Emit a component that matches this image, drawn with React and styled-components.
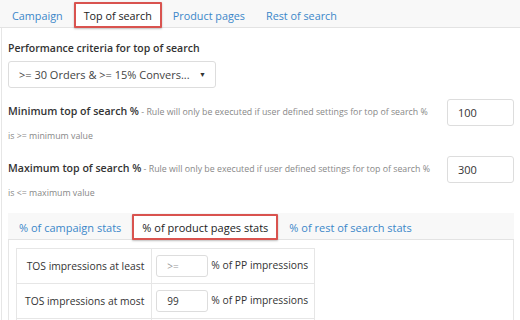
import React, { useState } from 'react';
import styled, { createGlobalStyle } from 'styled-components';

const GlobalStyle = createGlobalStyle`
  body {
    margin: 0;
    background: #fff;
    font-family: "Open Sans", "Noto Sans", sans-serif;
    color: #333;
  }
`;

const App = () => {
  const [tab, setTab] = useState('Top of search');
  const [subTab, setSubTab] = useState('% of product pages stats');
  const tabs = ['Campaign', 'Top of search', 'Product pages', 'Rest of search'];
  const subTabs = ['% of campaign stats', '% of product pages stats', '% of rest of search stats'];

  return (
    <Page>
      <GlobalStyle />
      <TabBar>
        {tabs.map((t) => (
          <Tab key={t} $active={t === tab} onClick={() => setTab(t)}>{t}</Tab>
        ))}
      </TabBar>
      <Body>
        <Label>Performance criteria for top of search</Label>
        <Select>
          <span>&gt;= 30 Orders &amp; &gt;= 15% Convers...</span>
          <Caret>▼</Caret>
        </Select>

        <Settings>
          <Setting>
            <SettingText>
              <strong>Minimum top of search %</strong>
              <Hint> - Rule will only be executed if user defined settings for top of search % is &gt;= minimum value</Hint>
            </SettingText>
            <NumInput defaultValue="100" />
          </Setting>

          <Setting>
            <SettingText>
              <strong>Maximum top of search %</strong>
              <Hint> - Rule will only be executed if user defined settings for top of search % is &lt;= maximum value</Hint>
            </SettingText>
            <NumInput defaultValue="300" />
          </Setting>
        </Settings>

        <SubPanel>
          <SubTabBar>
            {subTabs.map((t) => (
              <SubTab key={t} $active={t === subTab} onClick={() => setSubTab(t)}>{t}</SubTab>
            ))}
          </SubTabBar>
          <SubBody>
            <Table>
              <tbody>
                <tr>
                  <LabelCell>TOS impressions at least</LabelCell>
                  <ValueCell>
                    <SmallInput placeholder=">=" />
                    <span>% of PP impressions</span>
                  </ValueCell>
                </tr>
                <tr>
                  <LabelCell>TOS impressions at most</LabelCell>
                  <ValueCell>
                    <SmallInput defaultValue="99" />
                    <span>% of PP impressions</span>
                  </ValueCell>
                </tr>
                <tr>
                  <LabelCell>&nbsp;</LabelCell>
                  <ValueCell>&nbsp;</ValueCell>
                </tr>
              </tbody>
            </Table>
          </SubBody>
        </SubPanel>
      </Body>
    </Page>
  );
};

export default App;

const Page = styled.div`
  width: 520px;
  height: 320px;
  overflow: hidden;
`;

const TabBar = styled.div`
  display: flex;
  align-items: flex-end;
  gap: 1px;
  height: 26px;
  padding: 1px 0 0 2px;
  background: #f8f8f8;
  border-bottom: 1px solid #e3e3e3;
`;

const Tab = styled.div`
  height: 26px;
  box-sizing: border-box;
  padding: 0 8px;
  margin-bottom: -1px;
  display: flex;
  align-items: center;
  font-size: 10.8px;
  white-space: nowrap;
  cursor: pointer;
  color: ${(p) => (p.$active ? '#222' : '#3b87c9')};
  background: ${(p) => (p.$active ? '#fff' : 'transparent')};
  border: 2px solid ${(p) => (p.$active ? '#d9534f' : 'transparent')};
  border-radius: 1px;
  box-shadow: ${(p) => (p.$active ? '0 1px 2px rgba(0,0,0,0.25)' : 'none')};
`;

const Body = styled.div`
  border-left: 1px solid #e6e6e6;
  margin-left: 1px;
  padding: 12px 6px 0 6px;
`;

const Label = styled.div`
  font-size: 10.5px;
  font-weight: 600;
  line-height: 16px;
  color: #333;
  margin-bottom: 5px;
`;

const Select = styled.div`
  width: 208px;
  height: 27px;
  box-sizing: border-box;
  border: 1px solid #ddd;
  border-radius: 3px;
  display: flex;
  align-items: center;
  justify-content: space-between;
  padding: 0 9px 0 10px;
  font-size: 11px;
  white-space: nowrap;
  color: #444;
`;

const Caret = styled.span`
  font-size: 7px;
  color: #333;
`;

const Settings = styled.div`
  display: flex;
  flex-direction: column;
  gap: 11px;
  margin-top: 11px;
`;

const Setting = styled.div`
  display: grid;
  grid-template-columns: 1fr 67px;
  column-gap: 12px;
  align-items: start;
  height: 46px;

  strong {
    font-weight: 600;
    font-size: 10.6px;
    color: #333;
  }
`;

const SettingText = styled.div`
  line-height: 21px;
  padding-top: 0;
`;

const Hint = styled.span`
  font-size: 8.8px;
  color: #888;
`;

const NumInput = styled.input`
  width: 67px;
  height: 27px;
  box-sizing: border-box;
  border: 1px solid #ddd;
  border-radius: 3px;
  padding: 0 10px;
  font-family: inherit;
  font-size: 11px;
  color: #333;
  outline: none;
`;

const SubPanel = styled.div`
  margin-top: 11px;
`;

const SubTabBar = styled.div`
  display: flex;
  align-items: flex-end;
  gap: 1px;
  height: 26px;
  padding-left: 1px;
  background: #f8f8f8;
  border-bottom: 1px solid #e3e3e3;
`;

const SubTab = styled(Tab)`
  padding: 0 8px;
  font-size: 11px;
`;

const SubBody = styled.div`
  border-left: 1px solid #e6e6e6;
  border-right: 1px solid #e6e6e6;
  padding: 8px 7px 0;
`;

const Table = styled.table`
  border-collapse: collapse;
  font-size: 10.3px;
  color: #333;
`;

const LabelCell = styled.td`
  box-sizing: border-box;
  border: 1px solid #e6e6e6;
  height: 34px;
  padding: 0 7px 0 8px;
  text-align: right;
  width: 135px;
  white-space: nowrap;
`;

const ValueCell = styled.td`
  border: 1px solid #e6e6e6;
  height: 34px;
  padding: 0 6px 0 4px;
  white-space: nowrap;

  span {
    margin-left: 3px;
  }
`;

const SmallInput = styled.input`
  width: 52px;
  height: 22px;
  box-sizing: border-box;
  border: 1px solid #ddd;
  border-radius: 3px;
  padding: 0 10px;
  font-family: inherit;
  font-size: 10px;
  color: #333;
  outline: none;
  vertical-align: middle;

  &::placeholder {
    color: #999;
  }
`;
